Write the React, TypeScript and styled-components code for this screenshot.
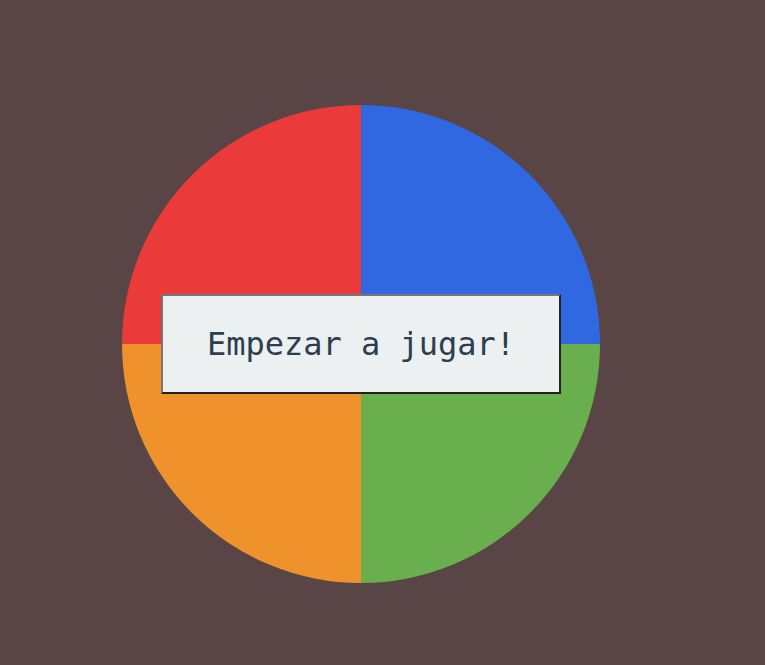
import React from "react";
import styled, { createGlobalStyle } from "styled-components";

const Global = createGlobalStyle`
  html, body {
    margin: 0;
    padding: 0;
    background: #594546;
    height: 100%;
  }
  #root { min-height: 100%; }
`;

const Page = styled.div`
  min-height: 665px;
  background: #594546;
  padding: 105px 0 0 122px;
  box-sizing: border-box;
`;

const Board = styled.div`
  position: relative;
  width: 478px;
  height: 478px;
  display: grid;
  grid-template-columns: 239px 239px;
  grid-template-rows: 239px 239px;
`;

type Corner = "tl" | "tr" | "bl" | "br";

const radius: Record<Corner, string> = {
  tl: "100% 0 0 0",
  tr: "0 100% 0 0",
  bl: "0 0 0 100%",
  br: "0 0 100% 0",
};

const Pad = styled.div<{ $color: string; $corner: Corner }>`
  background: ${(p) => p.$color};
  border-radius: ${(p) => radius[p.$corner]};
`;

const StartButton = styled.button`
  position: absolute;
  left: 39px;
  top: 189px;
  width: 400px;
  height: 100px;
  box-sizing: border-box;
  background: #ecf0f1;
  color: #2c3e50;
  font-family: "DejaVu Sans Mono", monospace;
  font-size: 32px;
  border-style: solid;
  border-width: 2px;
  border-color: #767676 #222222 #222222 #767676;
  padding: 0;
  cursor: pointer;
`;

export default function App() {
  return (
    <>
      <Global />
      <Page>
        <Board>
          <Pad $color="#eb3a3a" $corner="tl" />
          <Pad $color="#2f68e0" $corner="tr" />
          <Pad $color="#f0922b" $corner="bl" />
          <Pad $color="#6aaf4d" $corner="br" />
          <StartButton>Empezar a jugar!</StartButton>
        </Board>
      </Page>
    </>
  );
}
